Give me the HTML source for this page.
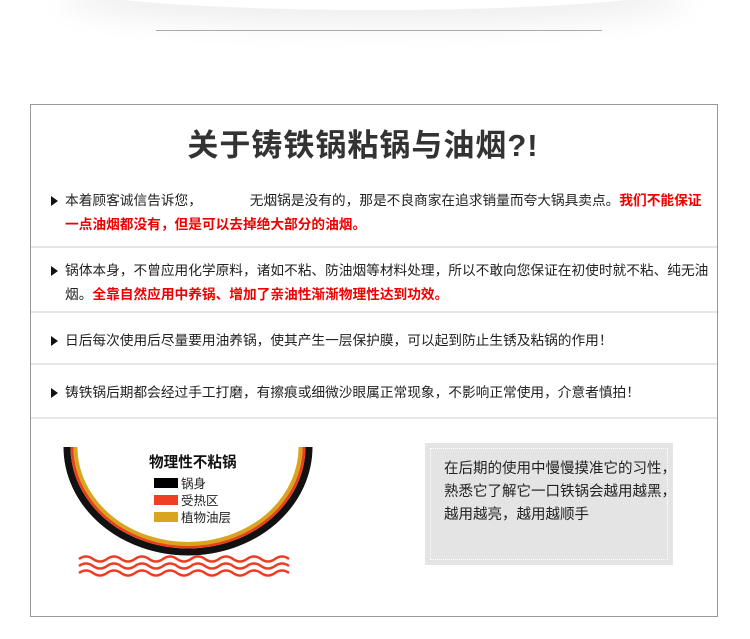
<!DOCTYPE html><html><head><meta charset="utf-8"><style>
body{margin:0;width:750px;height:639px;background:#fff;position:relative;overflow:hidden;font-family:"Liberation Sans","Noto Sans CJK SC",sans-serif}
.sh{position:absolute;left:60px;top:-40px;width:630px;height:50px;border-radius:50%;box-shadow:0 14px 30px rgba(0,0,0,.07)}
.hl{position:absolute;left:156px;top:30px;width:446px;height:1px;background:#aaa}
.box{position:absolute;left:30px;top:104px;width:688px;height:513px;border:1px solid #999;box-sizing:border-box}
.t{position:absolute;left:0;width:726px;top:120px;text-align:center;font-size:31px;font-weight:bold;color:#333;letter-spacing:1px}
.p{position:absolute;left:65px;font-size:13.7px;color:#222;line-height:24px;width:648px}
.p:before{content:"";position:absolute;left:-14px;top:7px;border-left:7px solid #111;border-top:5px solid transparent;border-bottom:5px solid transparent}
.r{color:#e00;font-weight:bold}
.sep{position:absolute;left:31px;width:686px;height:2px;background:#e6e6e6}
.g{position:absolute;left:425px;top:443px;width:248px;height:122px;background:#e4e4e4}
.g i{position:absolute;left:5px;top:5px;right:5px;bottom:5px;border:1px dotted #fff}
.gt{position:absolute;left:444px;top:458px;font-size:14.5px;line-height:23px;color:#222}
</style></head><body>
<div class="sh"></div><div class="hl"></div>
<div class="box"></div>
<div class="t">关于铸铁锅粘锅与油烟?!</div>
<div class="p" style="top:189px">本着顾客诚信告诉您，　　　　无烟锅是没有的，那是不良商家在追求销量而夸大锅具卖点。<span class="r">我们不能保证<br>一点油烟都没有，但是可以去掉绝大部分的油烟。</span></div>
<div class="sep" style="top:246px"></div>
<div class="p" style="top:259px">锅体本身，不曾应用化学原料，诸如不粘、防油烟等材料处理，所以不敢向您保证在初使时就不粘、纯无油<br>烟。<span class="r">全靠自然应用中养锅、增加了亲油性渐渐物理性达到功效。</span></div>
<div class="sep" style="top:311px"></div>
<div class="p" style="top:329px">日后每次使用后尽量要用油养锅，使其产生一层保护膜，可以起到防止生锈及粘锅的作用！</div>
<div class="sep" style="top:363px"></div>
<div class="p" style="top:381px">铸铁锅后期都会经过手工打磨，有擦痕或细微沙眼属正常现象，不影响正常使用，介意者慎拍！</div>
<div class="sep" style="top:417px"></div>
<svg style="position:absolute;left:0;top:0" width="750" height="639">
<path d="M67 447 A121 105 0 0 0 309 447" fill="none" stroke="#111" stroke-width="7"/>
<path d="M72 447 A116 100 0 0 0 304 447" fill="none" stroke="#e8401c" stroke-width="3"/>
<path d="M75.5 447 A112.5 97 0 0 0 300.5 447" fill="none" stroke="#d9a521" stroke-width="4"/>
<g fill="none" stroke="#ee3b22" stroke-width="2.5">
<path d="M79 559 q7 -5 14 0 t14 0 t14 0 t14 0 t14 0 t14 0 t14 0 t14 0 t14 0 t14 0 t14 0 t14 0 t14 0 t14 0 t14 0"/>
<path d="M79 566 q7 -5 14 0 t14 0 t14 0 t14 0 t14 0 t14 0 t14 0 t14 0 t14 0 t14 0 t14 0 t14 0 t14 0 t14 0 t14 0"/>
<path d="M79 573 q7 -5 14 0 t14 0 t14 0 t14 0 t14 0 t14 0 t14 0 t14 0 t14 0 t14 0 t14 0 t14 0 t14 0 t14 0 t14 0"/>
</g>
<rect x="154" y="478" width="24" height="10" fill="#000"/>
<rect x="154" y="495" width="24" height="10" fill="#ef3e22"/>
<rect x="154" y="512" width="24" height="10" fill="#d9a521"/>
<text x="149" y="467" font-size="14.6" font-weight="bold" fill="#111" font-family="Liberation Sans,Noto Sans CJK SC,sans-serif">物理性不粘锅</text>
<g font-size="12.5" fill="#222" font-family="Liberation Sans,Noto Sans CJK SC,sans-serif">
<text x="181" y="488">锅身</text><text x="181" y="505">受热区</text><text x="181" y="522">植物油层</text></g>
</svg>
<div class="g"><i></i></div>
<div class="gt">在后期的使用中慢慢摸准它的习性，<br>熟悉它了解它一口铁锅会越用越黑，<br>越用越亮，越用越顺手</div>
</body></html>
